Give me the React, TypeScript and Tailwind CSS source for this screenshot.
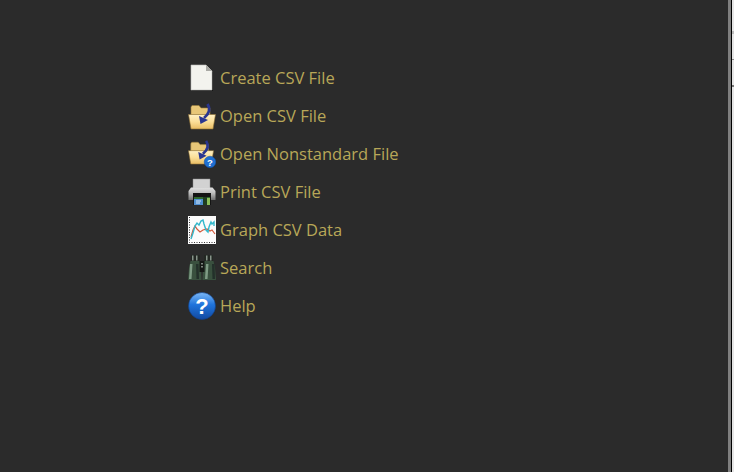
import React from 'react'

function FileIcon() {
  return (
    <svg width="28" height="28" viewBox="0 0 28 28">
      <path d="M3.5 2.500h15l6.500 6V27H3.500z" fill="#0f0f0f" opacity="0.75" />
      <path d="M3 1h15l6 6v19H3z" fill="#f3f3ee" stroke="#bdbdb8" strokeWidth="0.6" />
      <path d="M18 1v6h6z" fill="#a9a9a4" />
    </svg>
  )
}

function Folder() {
  return (
    <>
      <path d="M3 5l1-1.500h7l2 2.500h9v7H3z" fill="#e8c778" stroke="#9a7c3c" strokeWidth="0.6" />
      <path d="M0.500 12.500h27L25 27H3z" fill="url(#folderFront)" stroke="#8d6f30" strokeWidth="0.6" />
    </>
  )
}

function Arrow() {
  return (
    <>
      <path d="M19.500 2c3 4.500 2 9.500-3.500 14" fill="none" stroke="#2a3690" strokeWidth="2.800" />
      <path d="M11 14l1.500 8 7.500-4z" fill="#2a3690" />
    </>
  )
}

function FolderDefs() {
  return (
    <defs>
      <linearGradient id="folderFront" x1="0" y1="0" x2="0" y2="1">
        <stop offset="0" stopColor="#fff0c4" />
        <stop offset="0.5" stopColor="#fbdf98" />
        <stop offset="1" stopColor="#e9bd63" />
      </linearGradient>
    </defs>
  )
}

function OpenIcon() {
  return (
    <svg width="28" height="28" viewBox="0 0 28 28">
      <FolderDefs />
      <Folder />
      <Arrow />
    </svg>
  )
}

function NonstandardIcon() {
  return (
    <svg width="28" height="28" viewBox="0 0 28 28">
      <FolderDefs />
      <g transform="translate(0 -1) scale(0.93)">
        <Folder />
        <Arrow />
      </g>
      <circle cx="22" cy="22" r="5.800" fill="#1f6fd0" stroke="#134f9f" strokeWidth="0.5" />
      <text x="22" y="25.500" textAnchor="middle" fontSize="9.500" fontWeight="700" fontFamily="Liberation Sans" fill="#fff">?</text>
    </svg>
  )
}

function PrintIcon() {
  return (
    <svg width="28" height="28" viewBox="0 0 28 28">
      <defs>
        <linearGradient id="printerBody" x1="0" y1="0" x2="0" y2="1">
          <stop offset="0" stopColor="#e2e2e2" />
          <stop offset="0.45" stopColor="#bdbdbd" />
          <stop offset="1" stopColor="#6e6e6e" />
        </linearGradient>
      </defs>
      <path d="M5 1h17v9H5z" fill="#d2d2d2" stroke="#8f8f8f" strokeWidth="0.5" />
      <path d="M3 9.500h21.500L27.500 13v9H0.500v-9z" fill="url(#printerBody)" />
      <path d="M5 15h18v12H5z" fill="#141414" />
      <path d="M6 19h16v8H6z" fill="#2f6a2f" />
      <path d="M6 21h9v6H6z" fill="#4f8ed0" />
      <path d="M15 19h4v8h-4z" fill="#1f3d22" />
      <path d="M19 20h3v7h-3z" fill="#8cbf5a" />
      <path d="M8 22.500h5v1H8zM8 24.500h4v1H8z" fill="#d5e6f5" />
    </svg>
  )
}

function GraphIcon() {
  return (
    <svg width="28" height="28" viewBox="0 0 28 28">
      <rect width="28" height="28" fill="#fbfbfb" />
      <path d="M1.500 1v25.500H28" fill="none" stroke="#333" strokeWidth="1" strokeDasharray="1 1.500" />
      <path d="M3 21l2-7 2-4 2 3 3 3 3-2 4-1 3 2 2-1 3 4" fill="none" stroke="#d25a3c" strokeWidth="1.200" />
      <path d="M3 23l2-6 2-7 2-3 2 2 2-4 2-1 1 4 2 6 2 2 1-5 2-5 1 2 2-2v4" fill="none" stroke="#32b8cc" strokeWidth="1.400" />
    </svg>
  )
}

function SearchIcon() {
  return (
    <svg width="30" height="28" viewBox="0 0 30 28">
      <path d="M4 1h9v6H4zM17 1h9v6h-9z" fill="#232823" />
      <path d="M5 1.500h1.500v5H5zM9 1.500h1.500v5H9zM19 1.500h1.500v5H19zM23 1.500h1.500v5H23z" fill="#87938a" />
      <path d="M3.500 7H14v7l.5 12H1l1-12z" fill="#39503e" />
      <path d="M16 7h10.500l1.500 7 1 12H15.500l.5-12z" fill="#39503e" />
      <path d="M3 10l-1 15h2.500l1-15zM19 10l-1 15h2.500l1-15z" fill="#7f9c85" />
      <path d="M9 10l.5 15H12l-.5-15zM25 10l.5 15H28l-.5-15z" fill="#23302a" />
      <path d="M12.500 7h5v11h-5z" fill="#151815" />
      <path d="M14 9h2v1.500h-2zM14 12h2v1.500h-2z" fill="#7d857f" />
    </svg>
  )
}

function HelpIcon() {
  return (
    <svg width="28" height="28" viewBox="0 0 28 28">
      <defs>
        <linearGradient id="helpBlue" x1="0" y1="0" x2="0" y2="1">
          <stop offset="0" stopColor="#7db8f5" />
          <stop offset="0.45" stopColor="#1f74dc" />
          <stop offset="1" stopColor="#1249a0" />
        </linearGradient>
      </defs>
      <circle cx="14" cy="14" r="13.500" fill="url(#helpBlue)" stroke="#0f3f8a" strokeWidth="0.6" />
      <text x="14" y="22" textAnchor="middle" fontSize="22" fontWeight="700" fontFamily="Liberation Sans" fill="#fff">?</text>
    </svg>
  )
}

const items = [
  { label: 'Create CSV File', icon: <FileIcon /> },
  { label: 'Open CSV File', icon: <OpenIcon /> },
  { label: 'Open Nonstandard File', icon: <NonstandardIcon /> },
  { label: 'Print CSV File', icon: <PrintIcon /> },
  { label: 'Graph CSV Data', icon: <GraphIcon /> },
  { label: 'Search', icon: <SearchIcon /> },
  { label: 'Help', icon: <HelpIcon /> },
]

function App() {
  return (
    <div className="flex h-[472px] w-[734px] overflow-hidden bg-[#2b2b2b] font-['Open_Sans',sans-serif]">
      <div className="flex-1 pl-[187px] pt-[59px]">
        {items.map((item) => (
          <div key={item.label} className="flex h-[38px] items-center gap-[3px]">
            <div className="flex w-[30px] justify-center">{item.icon}</div>
            <span className="text-[16.5px] text-[#b8a758]">{item.label}</span>
          </div>
        ))}
      </div>
      <div className="w-[3px] bg-[#7f7f7f]" />
      <div className="w-px bg-black" />
      <div className="flex w-[2px] flex-col bg-[#e6e6e6]">
        <div className="mt-[31px] h-[3px] bg-[#bdbdbd]" />
        <div className="mt-[25px] h-px bg-[#8a8a8a]" />
        <div className="mt-[25px] h-[2px] bg-[#777777]" />
      </div>
    </div>
  )
}

export default App
